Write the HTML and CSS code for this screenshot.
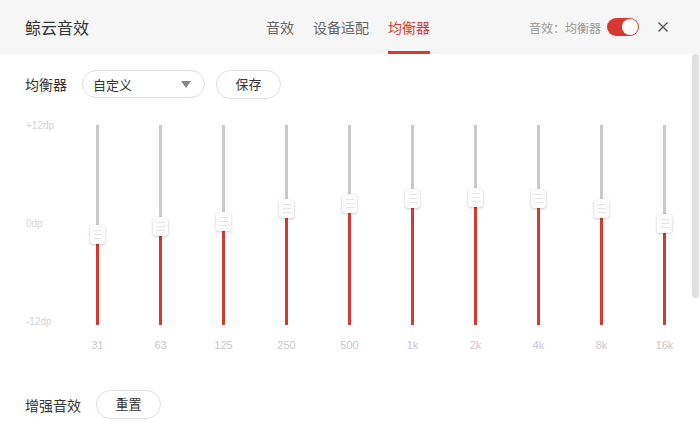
FILE: index.html
```html
<!DOCTYPE html>
<html lang="zh-CN">
<head>
    <meta charset="UTF-8">
    <title>鲸云音效</title>
    <link rel="stylesheet" href="styles.css">
</head>
<body>
<div class="app">
    <!--头部-->
    <div class="head">
        <div class="title">鲸云音效</div>
        <ul class="tabs">
            <li>音效</li>
            <li>设备适配</li>
            <li class="current">均衡器</li>
        </ul>
        <div class="status">
            <span>音效：均衡器</span>
            <span class="switch on"><i></i></span>
            <svg class="close" width="12" height="12" viewBox="0 0 12 12">
                <path d="M1.5 1.5 L10.5 10.5 M10.5 1.5 L1.5 10.5" stroke="#555" stroke-width="1.4" fill="none"/>
            </svg>
        </div>
    </div>

    <!--内容-->
    <div class="main">
        <div class="inner">
            <div class="row">
                <span class="label">均衡器</span>
                <div class="select">
                    <span>自定义</span>
                    <i class="arrow"></i>
                </div>
                <a class="btn" href="#">保存</a>
            </div>

            <div class="eq">
                <div class="scale">
                    <span>+12dp</span>
                    <span>0dp</span>
                    <span>-12dp</span>
                </div>
                <div class="band">
                    <div class="track"><b style="height:45.5%"></b><i class="thumb" style="bottom:45.5%"></i></div>
                    <span class="freq">31</span>
                </div>
                <div class="band">
                    <div class="track"><b style="height:49.5%"></b><i class="thumb" style="bottom:49.5%"></i></div>
                    <span class="freq">63</span>
                </div>
                <div class="band">
                    <div class="track"><b style="height:52%"></b><i class="thumb" style="bottom:52%"></i></div>
                    <span class="freq">125</span>
                </div>
                <div class="band">
                    <div class="track"><b style="height:58.5%"></b><i class="thumb" style="bottom:58.5%"></i></div>
                    <span class="freq">250</span>
                </div>
                <div class="band">
                    <div class="track"><b style="height:61%"></b><i class="thumb" style="bottom:61%"></i></div>
                    <span class="freq">500</span>
                </div>
                <div class="band">
                    <div class="track"><b style="height:63.5%"></b><i class="thumb" style="bottom:63.5%"></i></div>
                    <span class="freq">1k</span>
                </div>
                <div class="band">
                    <div class="track"><b style="height:64%"></b><i class="thumb" style="bottom:64%"></i></div>
                    <span class="freq">2k</span>
                </div>
                <div class="band">
                    <div class="track"><b style="height:63.5%"></b><i class="thumb" style="bottom:63.5%"></i></div>
                    <span class="freq">4k</span>
                </div>
                <div class="band">
                    <div class="track"><b style="height:58.5%"></b><i class="thumb" style="bottom:58.5%"></i></div>
                    <span class="freq">8k</span>
                </div>
                <div class="band">
                    <div class="track"><b style="height:51%"></b><i class="thumb" style="bottom:51%"></i></div>
                    <span class="freq">16k</span>
                </div>
            </div>

            <div class="row enhance">
                <span class="label">增强音效</span>
                <a class="btn" href="#">重置</a>
            </div>
        </div>
        <!--滚动条-->
        <span class="scrollbar"></span>
    </div>
</div>
</body>
</html>
```

FILE: styles.css
```css
*{
    margin: 0;
    padding: 0;
    list-style: none;
    box-sizing: border-box;
}
body{
    width: 700px;
    height: 440px;
    overflow: hidden;
    background: #fff;
    font-family: "Liberation Sans", "Noto Sans CJK SC", sans-serif;
    color: #333;
}

/* 头部 */
.head{
    height: 54px;
    background: #f6f6f6;
    display: flex;
    align-items: center;
    padding: 0 31px 0 25px;
}
.head .title{
    width: 241px;
    font-size: 16px;
    color: #333;
}
.tabs{
    display: flex;
    height: 54px;
    gap: 19px;
}
.tabs li{
    height: 54px;
    line-height: 54px;
    font-size: 14px;
    color: #666;
    border-bottom: 3px solid transparent;
    padding-top: 1px;
}
.tabs .current{
    color: #d7392f;
    border-bottom-color: #d7392f;
}
.status{
    margin-left: auto;
    display: flex;
    align-items: center;
    font-size: 12px;
    color: #999;
}
.switch{
    width: 32px;
    height: 18px;
    border-radius: 9px;
    background: #d7392f;
    margin-left: 6px;
    display: flex;
    align-items: center;
    justify-content: flex-end;
    padding-right: 1px;
}
.switch i{
    width: 16px;
    height: 16px;
    border-radius: 50%;
    background: #fff;
}
.close{
    margin-left: 18px;
}

/* 内容 */
.main{
    height: 386px;
    overflow: hidden;
    position: relative;
}
.scrollbar{
    position: absolute;
    right: 1px;
    top: 0;
    width: 7px;
    height: 244px;
    background: #e1e1e1;
    border-radius: 4px;
}
.inner{
    padding: 16px 0 0 25px;
}
.row{
    display: flex;
    align-items: center;
    height: 28px;
}
.label{
    font-size: 14px;
    color: #333;
}
.select{
    width: 123px;
    height: 28px;
    border: 1px solid #ddd;
    border-radius: 14px;
    margin-left: 15px;
    display: flex;
    align-items: center;
    justify-content: space-between;
    padding: 0 13px 0 10px;
    font-size: 13px;
    color: #333;
}
.arrow{
    width: 0;
    height: 0;
    border-left: 5px solid transparent;
    border-right: 5px solid transparent;
    border-top: 7px solid #888;
}
.btn{
    display: inline-block;
    width: 65px;
    height: 29px;
    line-height: 27px;
    border: 1px solid #ddd;
    border-radius: 15px;
    text-align: center;
    font-size: 13px;
    color: #333;
    text-decoration: none;
    margin-left: 11px;
}

/* 均衡器 */
.eq{
    display: flex;
    margin-top: 27px;
}
.scale{
    flex-shrink: 0;
    width: 41px;
    height: 206px;
    margin-top: -4px;
    display: flex;
    flex-direction: column;
    justify-content: space-between;
    font-size: 10px;
    line-height: 10px;
    color: #d4d4d4;
    padding-left: 1px;
}
.band{
    flex-shrink: 0;
    width: 63px;
    display: flex;
    flex-direction: column;
    align-items: center;
}
.track{
    width: 3px;
    height: 200px;
    background: #c9c9c9;
    position: relative;
}
.track b{
    position: absolute;
    left: 0;
    bottom: 0;
    width: 3px;
    background: #d7392f;
}
.thumb{
    position: absolute;
    left: -6px;
    width: 15px;
    height: 19px;
    margin-bottom: -10px;
    border-radius: 3px;
    box-shadow: 0 1px 3px rgba(0,0,0,0.22);
    background-color: #fcfcfc;
    background-image: linear-gradient(#e6e6e6, #e6e6e6), linear-gradient(#e6e6e6, #e6e6e6), linear-gradient(#e6e6e6, #e6e6e6);
    background-size: 8px 1px;
    background-repeat: no-repeat;
    background-position: center 5px, center 9px, center 13px;
}
.freq{
    margin-top: 13px;
    font-size: 11px;
    line-height: 14px;
    color: #c9c4cf;
}

.enhance{
    margin-top: 38px;
    height: 29px;
}
.enhance .btn{
    margin-left: 15px;
}
```
